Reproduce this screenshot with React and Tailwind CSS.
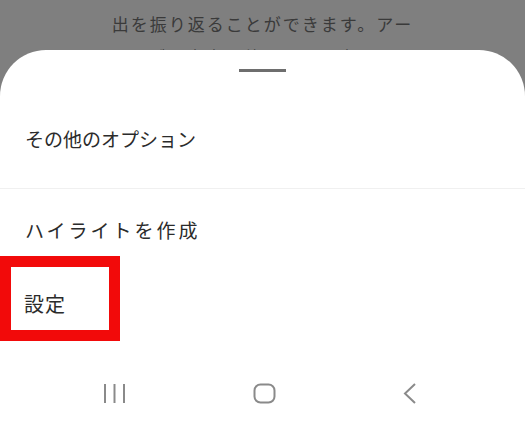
import React from 'react';

const font = { fontFamily: '"Noto Sans CJK JP", "Noto Sans", sans-serif' };

function NavBar() {
    return (
        <div className="flex items-center h-[22px] mt-[64px] pl-[102px] gap-[126px]">
            {/* recent apps */}
            <svg width="25" height="21" viewBox="0 0 25 21" fill="none" stroke="#8a8a8a" strokeWidth="2">
                <line x1="3" y1="1" x2="3" y2="20" />
                <line x1="12.5" y1="1" x2="12.5" y2="20" />
                <line x1="22" y1="1" x2="22" y2="20" />
            </svg>
            {/* home */}
            <svg width="23" height="21" viewBox="0 0 23 21" fill="none" stroke="#8a8a8a" strokeWidth="2">
                <rect x="1.5" y="1.5" width="20" height="18" rx="6" />
            </svg>
            {/* back */}
            <svg width="15" height="21" viewBox="0 0 15 21" fill="none" stroke="#8a8a8a" strokeWidth="2">
                <polyline points="13,1 3,10.5 13,20" />
            </svg>
        </div>
    );
}

export default function App() {
    return (
        <div className="relative w-[525px] h-[429px] overflow-hidden bg-[#7f7f7f]" style={font}>
            {/* dimmed page behind the sheet */}
            <div className="pt-[7px] text-center text-[17px] leading-[33px] tracking-[2px] text-[#3a3a3a]">
                <p>出を振り返ることができます。アー</p>
                <p>カイブの内容は他の人には表示され</p>
            </div>

            {/* bottom sheet */}
            <div className="absolute left-0 right-0 top-[50px] bottom-0 bg-white rounded-t-[46px]">
                <div className="flex justify-center pt-[19px]">
                    <div className="w-[47px] h-[3px] bg-[#6e6e6e]" />
                </div>

                <p className="mt-[53px] pl-[25px] text-[19px] leading-[28px] text-[#2b2b2b]">その他のオプション</p>
                <div className="mt-[35px] h-px bg-[#f0f0f0]" />

                <p className="mt-[27px] pl-[25px] text-[19px] leading-[28px] tracking-[3px] text-[#2b2b2b]">ハイライトを作成</p>
                <p className="mt-[46px] pl-[24px] text-[20px] leading-[28px] tracking-[1px] text-[#2b2b2b]">設定</p>

                <NavBar />
            </div>

            {/* highlight annotation */}
            <div className="absolute left-0 top-[256px] w-[120px] h-[85px] border-[11px] border-[#f20a0a]" />
        </div>
    );
}
